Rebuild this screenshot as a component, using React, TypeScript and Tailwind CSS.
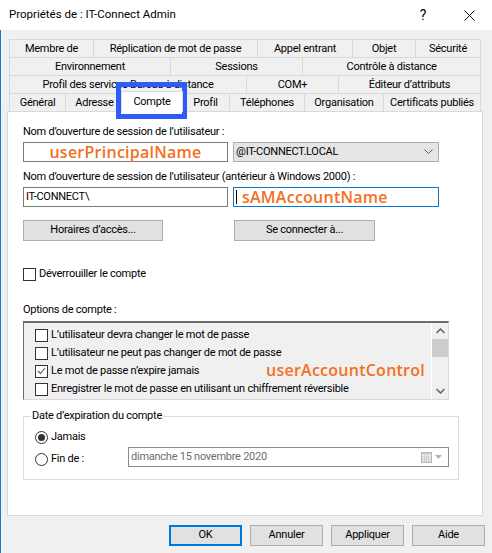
import React from 'react';

const rows = [
  [
    { label: 'Membre de', cls: 'w-[84px]' },
    { label: 'Réplication de mot de passe', cls: 'w-[164px]' },
    { label: 'Appel entrant', cls: 'w-[95px]' },
    { label: 'Objet', cls: 'w-[63px]' },
    { label: 'Sécurité', cls: 'w-[66px] border-r' },
  ],
  [
    { label: 'Environnement', cls: 'w-[161px]' },
    { label: 'Sessions', cls: 'w-[132px]' },
    { label: 'Contrôle à distance', cls: 'w-[179px] border-r' },
  ],
  [
    { label: 'Profil des services Bureau à distance', cls: 'w-[237px]' },
    { label: 'COM+', cls: 'w-[92px]' },
    { label: 'Éditeur d’attributs', cls: 'w-[143px] border-r' },
  ],
];

const options = [
  { label: 'L’utilisateur devra changer le mot de passe', checked: false },
  { label: 'L’utilisateur ne peut pas changer de mot de passe', checked: false },
  { label: 'Le mot de passe n’expire jamais', checked: true },
  { label: 'Enregistrer le mot de passe en utilisant un chiffrement réversible', checked: false },
];

function Tab({ label, cls }: { label: string; cls: string }) {
  return (
    <div className={`flex h-[18px] shrink-0 items-center justify-center whitespace-nowrap border-l border-t border-[#d9d9d9] pt-[1px] ${cls}`}>
      {label}
    </div>
  );
}

function Check({ checked }: { checked?: boolean }) {
  return (
    <div className="flex h-[13px] w-[13px] shrink-0 items-center justify-center border border-[#333333] bg-white">
      {checked && (
        <svg width="9" height="8" viewBox="0 0 9 8">
          <polyline points="1,4 3.5,6.5 8,1" fill="none" stroke="#555" strokeWidth="1.1" />
        </svg>
      )}
    </div>
  );
}

function Radio({ checked }: { checked?: boolean }) {
  return (
    <div className="flex h-[13px] w-[13px] shrink-0 items-center justify-center rounded-full border border-[#333333] bg-white">
      {checked && <div className="h-[7px] w-[7px] rounded-full bg-[#333333]" />}
    </div>
  );
}

function Button({ children, cls = '' }: { children: React.ReactNode; cls?: string }) {
  return (
    <div className={`flex h-[21px] shrink-0 items-center justify-center border border-[#adadad] bg-[#e1e1e1] ${cls}`}>
      {children}
    </div>
  );
}

const orange = "font-['Open_Sans',sans-serif] text-[16px] font-semibold tracking-[0.25px] text-[#f37021]";

export default function App() {
  return (
    <div className="relative h-[553px] w-[492px] overflow-hidden bg-[#f0f0f0] font-[Roboto,sans-serif] text-[11px] tracking-[-0.25px] text-black">
      {/* title bar */}
      <div className="flex h-[30px] items-center bg-white text-[11.5px] tracking-normal">
        <div className="flex-1 pl-[9px]">Propriétés de : IT-Connect Admin</div>
        <div className="flex w-[46px] justify-center text-[14px]">?</div>
        <div className="flex w-[46px] justify-center">
          <svg width="11" height="11" viewBox="0 0 11 11">
            <path d="M0.5 0.5 L10.5 10.5 M10.5 0.5 L0.5 10.5" stroke="#111" strokeWidth="1" />
          </svg>
        </div>
      </div>

      <div className="h-[523px] border-l border-[#1979ca] pt-[9px]">
        {/* tabs */}
        <div className="ml-[8px] w-[472px]">
          {rows.map((row, i) => (
            <div key={i} className="flex">
              {row.map((t) => (
                <Tab key={t.label} label={t.label} cls={t.cls} />
              ))}
            </div>
          ))}
          <div className="flex h-[18px]">
            <Tab label="Général" cls="w-[56px]" />
            <Tab label="Adresse" cls="w-[58px]" />
            <div className="relative z-10 -mx-[2px] -mt-[2px] flex h-[21px] w-[62px] shrink-0 items-center justify-center border-x border-t border-[#d9d9d9] bg-white">
              Compte
            </div>
            <Tab label="Profil" cls="w-[48px]" />
            <Tab label="Téléphones" cls="w-[75px]" />
            <Tab label="Organisation" cls="w-[79px]" />
            <Tab label="Certificats publiés" cls="w-[98px] border-r" />
          </div>
        </div>

        {/* panel */}
        <div className="ml-[6px] h-[405px] w-[476px] border border-[#d9d9d9] bg-white pl-[15px] pt-[12px]">
          <div className="h-[16px] leading-[16px]">Nom d’ouverture de session de l’utilisateur :</div>
          <div className="mt-[2px] flex gap-[5px]">
            <div className={`flex h-[20px] w-[205px] items-center justify-center border border-[#7a7a7a] ${orange}`}>
              userPrincipalName
            </div>
            <div className="flex h-[20px] w-[206px] items-center justify-between border border-[#adadad] bg-[#e5e5e5] pl-[2px] pr-[5px]">
              <span>@IT-CONNECT.LOCAL</span>
              <svg width="9" height="6" viewBox="0 0 9 6">
                <polyline points="0.5,0.5 4.5,4.5 8.5,0.5" fill="none" stroke="#606060" strokeWidth="1" />
              </svg>
            </div>
          </div>

          <div className="mt-[7px] h-[16px] leading-[16px]">
            Nom d’ouverture de session de l’utilisateur (antérieur à Windows 2000) :
          </div>
          <div className="mt-[2px] flex gap-[5px]">
            <div className="flex h-[20px] w-[205px] items-center border border-[#7a7a7a] pl-[2px]">IT-CONNECT\</div>
            <div className="flex h-[20px] w-[206px] items-center border border-[#0078d7] pl-[2px]">
              <div className="h-[14px] w-[1px] bg-black" />
              <span className={`ml-[5px] ${orange}`}>sAMAccountName</span>
            </div>
          </div>

          <div className="mt-[13px] flex gap-[71px]">
            <Button cls="w-[140px]">Horaires d’accès...</Button>
            <Button cls="w-[141px]">Se connecter à...</Button>
          </div>

          <div className="mt-[27px] flex h-[13px] items-center gap-[3px]">
            <Check />
            <span>Déverrouiller le compte</span>
          </div>

          <div className="mt-[21px] h-[16px] leading-[16px]">Options de compte :</div>

          {/* options list */}
          <div className="relative mt-[3px] flex h-[79px] w-[426px] border-b border-l border-r border-t-2 border-b-[#dadada] border-l-[#6d6d6d] border-r-[#dadada] border-t-[#6d6d6d] bg-[#f0f0f0]">
            <div className="flex-1 pl-[11px] pt-[3px]">
              {options.map((o) => (
                <div key={o.label} className="flex h-[18px] items-center gap-[3px]">
                  <Check checked={o.checked} />
                  <span className="whitespace-nowrap">{o.label}</span>
                </div>
              ))}
            </div>
            <div className="flex w-[17px] shrink-0 flex-col items-center border-l border-white bg-[#f0f0f0]">
              <div className="flex h-[16px] items-center">
                <svg width="9" height="6" viewBox="0 0 9 6">
                  <polyline points="0.5,5 4.5,1 8.5,5" fill="none" stroke="#606060" strokeWidth="1.5" />
                </svg>
              </div>
              <div className="h-[18px] w-full bg-[#cdcdcd]" />
              <div className="flex-1" />
              <div className="flex h-[17px] items-center">
                <svg width="9" height="6" viewBox="0 0 9 6">
                  <polyline points="0.5,1 4.5,5 8.5,1" fill="none" stroke="#606060" strokeWidth="1.5" />
                </svg>
              </div>
            </div>
            <div className={`absolute left-[242px] top-[38px] leading-[18px] ${orange}`}>userAccountControl</div>
          </div>

          {/* expiration */}
          <fieldset className="mt-[8px] w-[436px] border border-[#dcdcdc] pb-[12px] pl-[11px]">
            <legend className="-ml-[4px] px-[1px] leading-[16px]">Date d’expiration du compte</legend>
            <div className="mt-[4px] flex h-[19px] items-center gap-[3px]">
              <Radio checked />
              <span>Jamais</span>
            </div>
            <div className="flex h-[20px] items-center">
              <div className="flex w-[93px] items-center gap-[3px] pt-[4px]">
                <Radio />
                <span>Fin de :</span>
              </div>
              <div className="flex h-[20px] w-[321px] items-center justify-between border border-[#8c8c8c] bg-white pl-[2px] pr-[6px] text-[#6d6d6d]">
                <span>dimanche 15 novembre 2020</span>
                <div className="flex items-center gap-[3px]">
                  <svg width="11" height="11" viewBox="0 0 11 11">
                    <rect x="0.5" y="0.5" width="10" height="10" fill="#f4f4f4" stroke="#b5b5b5" />
                    <rect x="0.5" y="0.5" width="10" height="2" fill="#c8c8c8" />
                    <path d="M3.5 3 V10.5 M5.5 3 V10.5 M7.5 3 V10.5 M1 5 H10 M1 7 H10 M1 9 H10" stroke="#c8c8c8" strokeWidth="0.8" />
                  </svg>
                  <svg width="7" height="4" viewBox="0 0 7 4">
                    <polygon points="0,0 7,0 3.5,4" fill="#b0b0b0" />
                  </svg>
                </div>
              </div>
            </div>
          </fieldset>
        </div>

        {/* bottom buttons */}
        <div className="mt-[9px] flex justify-end gap-[8px] pr-[7px]">
          <div className="flex h-[21px] w-[73px] items-center justify-center border-2 border-[#0078d7] bg-[#e1e1e1]">OK</div>
          <Button cls="w-[73px]">Annuler</Button>
          <Button cls="w-[73px]">Appliquer</Button>
          <Button cls="w-[73px]">Aide</Button>
        </div>
      </div>

      {/* annotation */}
      <div className="absolute left-[116px] top-[82px] h-[37px] w-[71px] border-[5px] border-[#2f5cf7]" />
    </div>
  );
}
